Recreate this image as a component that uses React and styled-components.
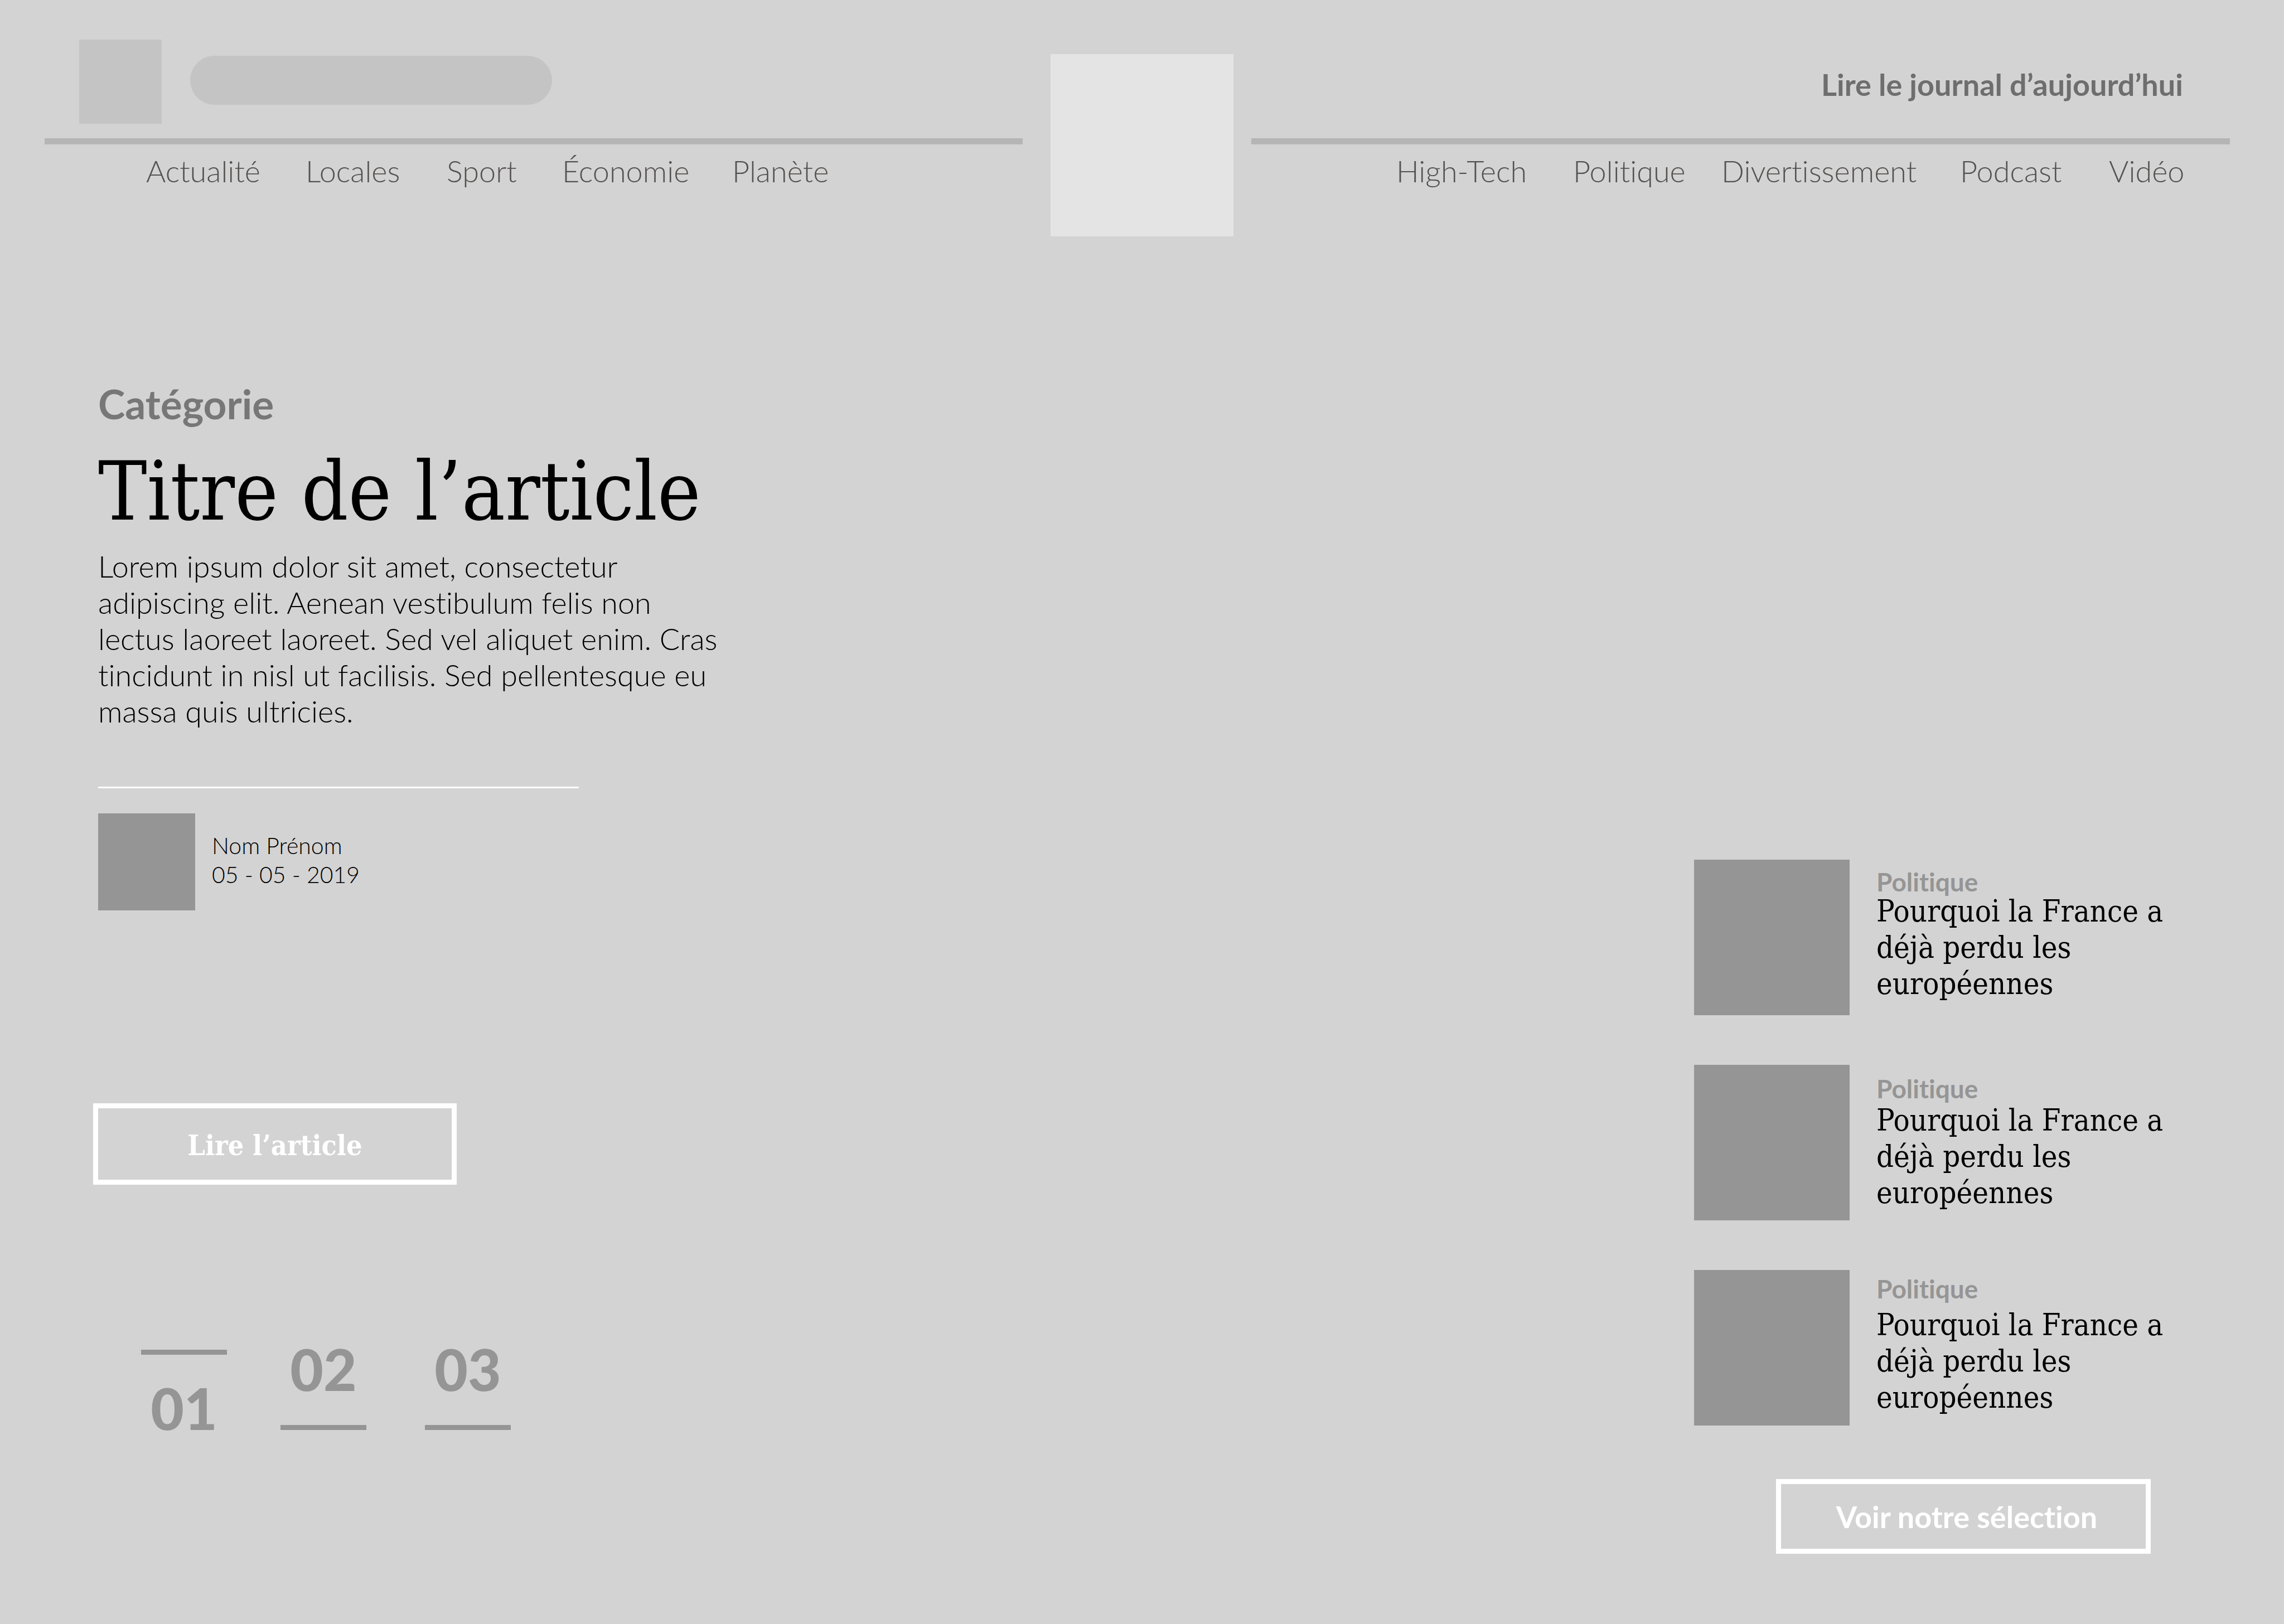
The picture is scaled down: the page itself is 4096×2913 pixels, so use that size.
import React from "react";
import styled, { createGlobalStyle } from "styled-components";

const SANS = `Lato, "Open Sans", sans-serif`;
const SERIF = `"DejaVu Serif Condensed", "DejaVu Serif", serif`;

const GlobalStyle = createGlobalStyle`
  *, *::before, *::after { box-sizing: border-box; }
  body {
    margin: 0;
    background: #d3d3d3;
    color: #000;
    font-family: ${SANS};
    font-variant-ligatures: none;
  }
  h1, h2, h3, p, ul { margin: 0; padding: 0; }
  ul { list-style: none; }
  a { color: inherit; text-decoration: none; }
`;

const Page = styled.div`
  min-height: 100vh;
  display: flex;
  flex-direction: column;
`;

const Header = styled.header`
  display: grid;
  grid-template-columns: 1fr 328px 1fr;
`;

const Side = styled.div`
  padding: ${(p) => (p.$end ? "0 97px 0 32px" : "0 50px 0 80px")};
`;

const TopBar = styled.div`
  height: 248px;
  display: flex;
  align-items: flex-start;
  justify-content: ${(p) => (p.$end ? "flex-end" : "flex-start")};
  gap: 51px;
  padding: ${(p) => (p.$end ? "119px 84px 0 0" : "71px 0 0 62px")};
`;

const HomeLink = styled.a`
  width: 148px;
  height: 151px;
  background: #c4c4c4;
`;

const Search = styled.input`
  width: 649px;
  height: 88px;
  margin-top: 29px;
  padding: 0 44px;
  border: 0;
  border-radius: 44px;
  background: #c4c4c4;
  font: 300 54px ${SANS};
`;

const PaperLink = styled.a`
  font-size: 54px;
  line-height: 65px;
  font-weight: 700;
  color: #6e6e6e;
  white-space: nowrap;
`;

const Rule = styled.div`
  height: 11px;
  background: #b5b5b5;
`;

const Nav = styled.nav`
  display: grid;
  grid-template-columns: ${(p) => p.$columns};
  padding: 15px 0 0 ${(p) => (p.$end ? "260px" : "182px")};
  font-size: 54px;
  line-height: 65px;
  font-weight: 300;
  color: #545251;
  white-space: nowrap;
`;

const Brand = styled.a`
  height: 327px;
  margin-top: 97px;
  background: #e4e4e4;
`;

const Main = styled.main`
  flex: 1;
  display: flex;
  justify-content: space-between;
  padding: 0 198px 0 176px;
`;

const Article = styled.article`
  width: 1130px;
  padding-top: 256px;
`;

const Category = styled.h2`
  font-size: 73px;
  line-height: 88px;
  font-weight: 700;
  color: #777;
`;

const Title = styled.h1`
  margin-top: 35px;
  font: 400 146px/156px ${SERIF};
  white-space: nowrap;
`;

const Summary = styled.p`
  margin-top: 24px;
  font-size: 54px;
  line-height: 65px;
  font-weight: 300;
`;

const Separator = styled.hr`
  width: 862px;
  height: 3px;
  margin: 103px 0 45px;
  border: 0;
  background: #fff;
`;

const Author = styled.div`
  display: flex;
  gap: 30px;
  font-size: 41px;
  line-height: 52px;
  font-weight: 300;
`;

const Avatar = styled.div`
  width: 174px;
  height: 174px;
  background: #959595;
`;

const AuthorText = styled.div`
  padding-top: 32px;
`;

const OutlineButton = styled.button`
  display: block;
  border: 9px solid #fff;
  background: transparent;
  color: #fff;
  line-height: 65px;
  font-weight: 700;
  font-variant-ligatures: none;
`;

const ReadButton = styled(OutlineButton)`
  width: 652px;
  height: 146px;
  margin: 346px 0 0 -9px;
  padding: 4px 0 0;
  font-family: ${SERIF};
  font-size: 50px;
`;

const SelectionButton = styled(OutlineButton)`
  width: 672px;
  height: 134px;
  margin: 96px 0 0 147px;
  padding: 0 0 0 12px;
  font-family: ${SANS};
  font-size: 54px;
`;

const Pager = styled.nav`
  display: grid;
  grid-template-columns: 250px 259px 154px;
  align-items: end;
  margin: 290px 0 0 77px;
`;

const PageLink = styled.a`
  width: 154px;
  display: flex;
  flex-direction: ${(p) => (p.$active ? "column" : "column-reverse")};
  gap: ${(p) => (p.$active ? "55px" : "61px")};
  font-size: 103px;
  line-height: 80px;
  font-weight: 900;
  color: #959595;
  text-align: center;
  &::before {
    content: "";
    height: 9px;
    background: #959595;
  }
`;

const Aside = styled.aside`
  width: 860px;
  padding-top: 1118px;
`;

const Cards = styled.ul`
  display: flex;
  flex-direction: column;
  gap: 89px;
`;

const Card = styled.li`
  display: flex;
  gap: 48px;
`;

const Thumb = styled.div`
  flex: none;
  width: 279px;
  height: 279px;
  background: #959595;
`;

const CardText = styled.div`
  display: flex;
  flex-direction: column;
  padding-top: ${(p) => p.$top}px;
  gap: ${(p) => p.$gap}px;
`;

const CardLabel = styled.p`
  font-size: 46px;
  line-height: 40px;
  font-weight: 700;
  color: #959595;
`;

const CardTitle = styled.h3`
  font: 400 54px/65px ${SERIF};
`;

const leftNav = ["Actualité", "Locales", "Sport", "Économie", "Planète"];
const rightNav = ["High-Tech", "Politique", "Divertissement", "Podcast", "Vidéo"];
const cards = [
  { top: 20, gap: 0 },
  { top: 23, gap: 4 },
  { top: 14, gap: 12 },
];

export default function App() {
  return (
    <Page>
      <GlobalStyle />
      <Header>
        <Side>
          <TopBar>
            <HomeLink href="#" aria-label="Accueil" />
            <Search type="search" aria-label="Rechercher" />
          </TopBar>
          <Rule />
          <Nav $columns="286px 253px 207px 305px auto">
            {leftNav.map((n) => (
              <a href="#" key={n}>{n}</a>
            ))}
          </Nav>
        </Side>
        <Brand href="#" aria-label="Le journal" />
        <Side $end>
          <TopBar $end>
            <PaperLink href="#">Lire le journal d’aujourd’hui</PaperLink>
          </TopBar>
          <Rule />
          <Nav $end $columns="317px 266px 428px 267px auto">
            {rightNav.map((n) => (
              <a href="#" key={n}>{n}</a>
            ))}
          </Nav>
        </Side>
      </Header>
      <Main>
        <Article>
          <Category>Catégorie</Category>
          <Title>Titre de l’article</Title>
          <Summary>
            Lorem ipsum dolor sit amet, consectetur adipiscing elit. Aenean
            vestibulum felis non lectus laoreet laoreet. Sed vel aliquet enim.
            Cras tincidunt in nisl ut facilisis. Sed pellentesque eu massa quis
            ultricies.
          </Summary>
          <Separator />
          <Author>
            <Avatar />
            <AuthorText>
              <p>Nom Prénom</p>
              <p>05 - 05 - 2019</p>
            </AuthorText>
          </Author>
          <ReadButton type="button">Lire l’article</ReadButton>
          <Pager>
            {["01", "02", "03"].map((n, i) => (
              <PageLink href="#" key={n} $active={i === 0}>{n}</PageLink>
            ))}
          </Pager>
        </Article>
        <Aside>
          <Cards>
            {cards.map((c, i) => (
              <Card key={i}>
                <Thumb />
                <CardText $top={c.top} $gap={c.gap}>
                  <CardLabel>Politique</CardLabel>
                  <CardTitle>Pourquoi la France a déjà perdu les européennes</CardTitle>
                </CardText>
              </Card>
            ))}
          </Cards>
          <SelectionButton type="button">Voir notre sélection</SelectionButton>
        </Aside>
      </Main>
    </Page>
  );
}
